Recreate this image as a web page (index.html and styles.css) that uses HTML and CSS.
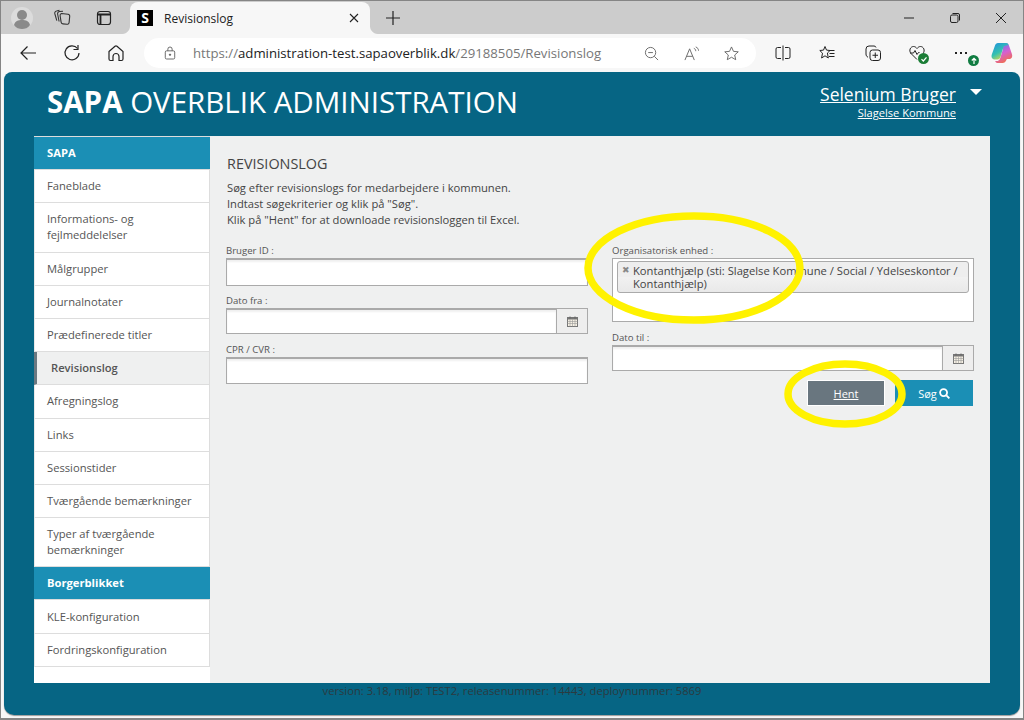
FILE: index.html
```html
<!DOCTYPE html>
<html lang="en">
<head>
    <meta charset="UTF-8">
    <title>Revisionslog</title>
    <link rel="stylesheet" href="styles.css">
</head>
<body>
    <div class="tabstrip">
        <div class="tb-btn">
            <svg class="icon-lg" viewBox="0 0 22 22"><circle cx="11" cy="11" r="11" fill="#dcdcdc"/><circle cx="11" cy="8" r="5" fill="#8a8a8a"/><path d="M3 18c1-4 4-5 8-5s7 1 8 5c-2 3-5 4-8 4s-6-1-8-4z" fill="#8a8a8a"/></svg>
        </div>
        <div class="tb-btn">
            <svg class="icon-wide" viewBox="0 0 18 18" fill="none" stroke="#333" stroke-width="1.100"><path d="M8.500 4.500l6.500.8a2 2 0 0 1 1.700 2.200l-.6 6a2 2 0 0 1-2.200 1.800l-4-.4a2 2 0 0 1-1.800-1.700l-1-6.500a2 2 0 0 1 1.400-2.200z"/><path d="M10 2.300L6.500 2.500A2.200 2.200 0 0 0 4.600 5l1.500 7.500"/><path d="M6.500 1.200L3.500 2A2.200 2.200 0 0 0 1.800 4.700l2 7"/></svg>
        </div>
        <div class="tb-btn tb-gap">
            <svg class="icon" viewBox="0 0 16 16" fill="none" stroke="#222" stroke-width="1.200"><rect x="1.500" y="1.500" width="13" height="13" rx="2.500"/><path d="M1.500 4.500h13M4.500 4.500v10" stroke-width="1.800"/></svg>
        </div>
        <div class="tab">
            <span class="favicon">S</span>
            <span class="tab-title">Revisionslog</span>
            <svg class="tab-close" viewBox="0 0 10 10" stroke="#222" stroke-width="1.100"><path d="M1 1l8 8M9 1l-8 8"/></svg>
        </div>
        <div class="tb-btn tb-new">
            <svg class="icon" viewBox="0 0 16 16" stroke="#222" stroke-width="1.200"><path d="M8 1v14M1 8h14"/></svg>
        </div>
        <div class="win-btns">
            <svg class="win-icon" viewBox="0 0 12 12" stroke="#222"><path d="M1 6h10"/></svg>
            <svg class="win-icon" viewBox="0 0 12 12" fill="none" stroke="#222"><rect x="1.500" y="3" width="7.500" height="7.500" rx="1.500"/><path d="M3.500 1.500h5.500a1.500 1.500 0 0 1 1.500 1.500v5.500"/></svg>
            <svg class="win-icon" viewBox="0 0 12 12" stroke="#222"><path d="M1 1l10 10M11 1l-10 10"/></svg>
        </div>
    </div>

    <div class="toolbar">
        <div class="tool-btn">
            <svg class="icon-lg" viewBox="0 0 18 18" fill="none" stroke="#222" stroke-width="1.200"><path d="M17 9H2M8.500 2.500L2 9l6.500 6.500"/></svg>
        </div>
        <div class="tool-btn">
            <svg class="icon-lg" viewBox="0 0 18 18" fill="none" stroke="#222" stroke-width="1.200"><path d="M14.500 4.500A7 7 0 1 0 16 9"/><path d="M15 1v4.500h-4.500"/></svg>
        </div>
        <div class="tool-btn">
            <svg class="icon-lg" viewBox="0 0 18 18" fill="none" stroke="#222" stroke-width="1.200"><path d="M2 7.500L8 2.300a1.500 1.500 0 0 1 2 0l6 5.200v7.500a1.500 1.500 0 0 1-1.500 1.500H12v-4a3 3 0 0 0-6 0v4H3.500A1.500 1.500 0 0 1 2 15z"/></svg>
        </div>
        <div class="addressbar">
            <svg class="addr-lock" viewBox="0 0 14 16" fill="none" stroke="#555"><rect x="1.500" y="5.500" width="11" height="9.500" rx="1.500"/><path d="M4.500 5.500V3.500a2.500 2.500 0 0 1 5 0v2"/><circle cx="7" cy="10" r=".8" fill="#555"/></svg>
            <span class="url"><span class="url-dim">https://</span>administration-test.sapaoverblik.dk<span class="url-dim">/29188505/Revisionslog</span></span>
            <svg class="addr-icon" viewBox="0 0 16 16" fill="none" stroke="#666"><circle cx="7" cy="7" r="5.500"/><path d="M4.500 7h5M11 11l4 4"/></svg>
            <svg class="addr-icon" viewBox="0 0 16 16" fill="none" stroke="#666"><path d="M1 15L6 3l5 12M2.800 11h6.400"/><path d="M10.500 2.500c1.500.5 2 1.500 2 3M12.500 1c2 .8 3 2.200 3 4"/></svg>
            <svg class="addr-icon" viewBox="0 0 16 16" fill="none" stroke="#666"><path d="M8 1l2.100 4.700 5.100.5-3.800 3.400 1.100 5L8 12l-4.500 2.600 1.100-5L.8 6.200l5.100-.5z"/></svg>
        </div>
        <div class="tools-right">
            <svg class="icon" viewBox="0 0 16 16" fill="none" stroke="#222"><path d="M6 2.500H2.500A1.500 1.500 0 0 0 1 4v8a1.500 1.500 0 0 0 1.500 1.500H6M10 2.500h3.500A1.500 1.500 0 0 1 15 4v8a1.500 1.500 0 0 1-1.500 1.500H10M8 .5v15"/></svg>
            <svg class="icon" viewBox="0 0 16 16" fill="none" stroke="#222"><path d="M6 1.500l1.500 3.600 3.500.4-2.600 2.500.9 5L6 10.800 2.600 13l.9-4.800L.8 5.500l3.700-.4zM10 5.500h5.500M10.500 8.500h5M10 11.500h5.500"/></svg>
            <svg class="icon" viewBox="0 0 16 16" fill="none" stroke="#222"><path d="M11 2.500a2 2 0 0 0-2-1.500H4a3 3 0 0 0-3 3v5c0 1.500.7 2.500 2 3.300"/><rect x="5" y="5" width="10.500" height="10.500" rx="2.500"/><path d="M10.250 7.500v5.500M7.500 10.250h5.500"/></svg>
            <span class="health">
                <svg class="icon" viewBox="0 0 16 16" fill="none" stroke="#222"><path d="M8 14.500L2 8.500C-.5 5.500 1.500 1.500 4.500 1.500c1.500 0 2.500.8 3.500 2 1-1.200 2-2 3.500-2 3 0 5 4 2.500 7M1 8h3.500l1.500-2.500 2 4 1.500-2h1"/></svg>
                <span class="badge badge-check">
                    <svg viewBox="0 0 8 8" fill="none" stroke="#fff" stroke-width="1.200"><path d="M1.500 4.200l1.800 1.800 3.200-3.700"/></svg>
                </span>
            </span>
            <span class="more">
                <span class="more-dots"><i></i><i></i><i></i></span>
                <span class="badge badge-up">
                    <svg viewBox="0 0 8 8" fill="none" stroke="#fff" stroke-width="1.200"><path d="M4 7V1.500M1.800 3.500L4 1.300l2.200 2.200"/></svg>
                </span>
            </span>
            <svg class="copilot" viewBox="0 0 22 22">
                <defs>
                    <linearGradient id="copA" x1="0" y1="0" x2=".6" y2="1"><stop offset="0" stop-color="#1f8fe0"/><stop offset=".6" stop-color="#35c1b0"/><stop offset="1" stop-color="#d8d84a"/></linearGradient>
                    <linearGradient id="copB" x1=".3" y1="0" x2=".7" y2="1"><stop offset="0" stop-color="#5a7cf0"/><stop offset=".5" stop-color="#d65fd0"/><stop offset="1" stop-color="#f3703f"/></linearGradient>
                </defs>
                <path d="M15 1c1.500 0 2.400.8 2.900 2.200l3 8.800c1 3-.5 5-3 5h-2c-1.500 3-2.500 4-4.400 4H7c-1.500 0-2.400-.6-2.800-2 2.800.4 4.300-.5 5.100-3l2.400-8C12.300 3 13.300 1 15 1z" fill="url(#copB)"/>
                <path d="M7 1h8c1.300 0 2 .7 2.400 2L15 3.500c-1.500 0-2.300.8-2.800 2.300L9.500 15c-.5 1.500-1.500 2.500-3 2.500H4c-3 0-4-2.500-3.200-5L4 3.500C4.500 2 5.500 1 7 1z" fill="url(#copA)"/>
            </svg>
        </div>
    </div>

    <div class="page">
        <header class="site-header">
            <h1 class="logo"><b>SAPA</b> OVERBLIK ADMINISTRATION</h1>
            <div class="user">
                <a class="user-name" href="#">Selenium Bruger</a>
                <a class="user-org" href="#">Slagelse Kommune</a>
            </div>
            <span class="user-caret"></span>
        </header>

        <div class="content">
            <nav class="sidebar">
                <a class="nav-head" href="#">SAPA</a>
                <a class="nav-item" href="#">Faneblade</a>
                <a class="nav-item" href="#">Informations- og fejlmeddelelser</a>
                <a class="nav-item" href="#">Målgrupper</a>
                <a class="nav-item" href="#">Journalnotater</a>
                <a class="nav-item" href="#">Prædefinerede titler</a>
                <a class="nav-item active" href="#">Revisionslog</a>
                <a class="nav-item" href="#">Afregningslog</a>
                <a class="nav-item" href="#">Links</a>
                <a class="nav-item" href="#">Sessionstider</a>
                <a class="nav-item" href="#">Tværgående bemærkninger</a>
                <a class="nav-item" href="#">Typer af tværgående bemærkninger</a>
                <a class="nav-head" href="#">Borgerblikket</a>
                <a class="nav-item" href="#">KLE-konfiguration</a>
                <a class="nav-item" href="#">Fordringskonfiguration</a>
            </nav>

            <main class="main">
                <h2 class="main-title">REVISIONSLOG</h2>
                <p class="intro">Søg efter revisionslogs for medarbejdere i kommunen.<br>Indtast søgekriterier og klik på "Søg".<br>Klik på "Hent" for at downloade revisionsloggen til Excel.</p>

                <form class="search-form">
                    <div class="col">
                        <div class="field">
                            <label>Bruger ID :</label>
                            <input class="input input-tall" type="text">
                        </div>
                        <div class="field">
                            <label>Dato fra :</label>
                            <div class="date-group">
                                <input class="input" type="text">
                                <span class="date-btn">
                                    <svg class="cal" viewBox="0 0 11 11"><rect x=".5" y="1.500" width="10" height="9" fill="#f6f0e4" stroke="#777"/><path d="M.5 1.500h10v2H.5z" fill="#777"/><path d="M3 .5v2M8 .5v2" stroke="#666"/><path d="M.5 5.500h10M.5 7.500h10M3 3.500v7M5.500 3.500v7M8 3.500v7" stroke="#999" stroke-width=".6"/></svg>
                                </span>
                            </div>
                        </div>
                        <div class="field field-low">
                            <label>CPR / CVR :</label>
                            <input class="input input-mid" type="text">
                        </div>
                    </div>
                    <div class="col">
                        <div class="field">
                            <label>Organisatorisk enhed :</label>
                            <div class="multi">
                                <div class="chip">
                                    <span class="chip-x">✖</span>
                                    <span>Kontanthjælp (sti: Slagelse Kommune / Social / Ydelseskontor / Kontanthjælp)</span>
                                </div>
                            </div>
                        </div>
                        <div class="field field-low">
                            <label>Dato til :</label>
                            <div class="date-group">
                                <input class="input" type="text">
                                <span class="date-btn">
                                    <svg class="cal" viewBox="0 0 11 11"><rect x=".5" y="1.500" width="10" height="9" fill="#f6f0e4" stroke="#777"/><path d="M.5 1.500h10v2H.5z" fill="#777"/><path d="M3 .5v2M8 .5v2" stroke="#666"/><path d="M.5 5.500h10M.5 7.500h10M3 3.500v7M5.500 3.500v7M8 3.500v7" stroke="#999" stroke-width=".6"/></svg>
                                </span>
                            </div>
                        </div>
                        <div class="actions">
                            <a class="btn btn-hent" href="#">Hent</a>
                            <a class="btn btn-soeg" href="#">Søg
                                <svg class="search-icon" viewBox="0 0 12 12" fill="none" stroke="#fff" stroke-width="2"><circle cx="5" cy="5" r="3.800"/><path d="M8 8l3.300 3.300"/></svg>
                            </a>
                        </div>
                    </div>
                </form>
            </main>
        </div>

        <footer class="version">version: 3.18, miljø: TEST2, releasenummer: 14443, deploynummer: 5869</footer>
    </div>

    <!-- yellow marker rings drawn over the screenshot -->
    <svg class="marker marker-org" viewBox="0 0 222 112" fill="none" stroke="#fff200" stroke-width="7.500"><ellipse cx="111" cy="56" rx="106" ry="52"/></svg>
    <svg class="marker marker-hent" viewBox="0 0 124 68" fill="none" stroke="#fff200" stroke-width="7.500"><ellipse cx="62" cy="34" rx="57" ry="30"/></svg>
</body>
</html>
```

FILE: styles.css
```css
* {
    box-sizing: border-box;
}
html, body {
    height: 100%;
}
body {
    margin: 0;
    width: 1024px;
    height: 720px;
    overflow: hidden;
    position: relative;
    display: flex;
    flex-direction: column;
    font-family: "Open Sans", "Noto Sans", sans-serif;
    background: #f7f7f7;
    border: 1px solid #858585;
    border-bottom-width: 2px;
    color: #555;
}
svg {
    display: block;
    flex-shrink: 0;
}
a {
    color: inherit;
}

/* browser chrome */
.tabstrip {
    height: 33px;
    flex-shrink: 0;
    background: #cccccc;
    display: flex;
    align-items: flex-end;
    padding: 0 0 0 1px;
}
.tb-btn {
    width: 40px;
    height: 32px;
    display: flex;
    align-items: center;
    justify-content: center;
}
.tb-gap {
    margin-left: 2px;
    margin-right: 6px;
}
.tb-new {
    margin-left: 2px;
}
.icon {
    width: 16px;
    height: 16px;
}
.icon-wide {
    width: 18px;
    height: 18px;
}
.icon-lg {
    width: 22px;
    height: 22px;
}
.tab {
    position: relative;
    width: 240px;
    height: 32px;
    margin-right: 1px;
    background: #f7f7f7;
    border-radius: 8px 8px 0 0;
    display: flex;
    align-items: center;
    padding: 0 11px 0 7px;
}
.tab::before, .tab::after {
    content: "";
    position: absolute;
    bottom: 0;
    width: 8px;
    height: 8px;
}
.tab::before {
    left: -8px;
    background: radial-gradient(circle at 0 0, #ccc 7.500px, #f7f7f7 8.500px);
}
.tab::after {
    right: -8px;
    background: radial-gradient(circle at 100% 0, #ccc 7.500px, #f7f7f7 8.500px);
}
.favicon {
    width: 16px;
    height: 16px;
    background: #000;
    color: #fff;
    font-weight: 700;
    font-size: 14px;
    line-height: 16px;
    text-align: center;
}
.tab-title {
    flex: 1;
    margin-left: 11px;
    font-size: 12px;
    color: #222;
}
.tab-close {
    width: 10px;
    height: 10px;
}
.win-btns {
    margin-left: auto;
    height: 32px;
    display: flex;
    align-items: center;
    gap: 34px;
    padding-right: 16px;
}
.win-icon {
    width: 12px;
    height: 12px;
}
.toolbar {
    height: 38px;
    flex-shrink: 0;
    display: flex;
    align-items: center;
    padding: 0 0 0 5px;
}
.tool-btn {
    width: 44px;
    display: flex;
    justify-content: center;
}
.tool-btn .icon-lg {
    width: 18px;
    height: 18px;
}
.addressbar {
    width: 612px;
    height: 30px;
    margin-left: 6px;
    background: #fff;
    border-radius: 15px;
    display: flex;
    align-items: center;
    padding: 0 17px 0 20px;
}
.addr-lock {
    width: 12px;
    height: 14px;
}
.url {
    flex: 1;
    margin-left: 17px;
    font-size: 13.200px;
    color: #222;
    white-space: nowrap;
}
.url-dim {
    color: #777;
}
.addr-icon {
    width: 15px;
    height: 15px;
    margin-left: 25px;
}
.tools-right {
    display: flex;
    align-items: center;
    margin-left: 19px;
    gap: 28px;
}
.tools-right > :nth-child(3) {
    margin-left: 2px;
}
.more {
    margin-left: 2px;
}
.health, .more {
    position: relative;
    display: block;
    width: 16px;
    height: 16px;
}
.badge {
    position: absolute;
    width: 11px;
    height: 11px;
    border-radius: 50%;
    padding: 1.500px;
}
.badge-check {
    right: -4px;
    bottom: -3px;
    background: #1b7d36;
}
.badge-up {
    right: -8px;
    bottom: -5px;
    background: #107c41;
}
.more-dots {
    display: flex;
    gap: 3px;
    padding: 7px 0 0 0;
}
.more-dots i {
    width: 2px;
    height: 2px;
    background: #222;
}
.copilot {
    width: 22px;
    height: 22px;
    margin-left: -8px;
}

/* page */
.page {
    flex: 1;
    margin: 0 3px 3px;
    background: #066584;
    border-radius: 8px 8px 10px 10px;
    display: flex;
    flex-direction: column;
    box-shadow: 0 1px 1px #999;
}
.site-header {
    height: 64px;
    flex-shrink: 0;
    display: flex;
    align-items: flex-start;
    padding: 0 38px 0 43px;
    color: #fff;
}
.logo {
    margin: 0;
    flex: 1;
    font-size: 29.500px;
    font-weight: 400;
    line-height: 60px;
}
.logo b {
    font-weight: 700;
}
.user {
    display: flex;
    flex-direction: column;
    align-items: flex-end;
    padding-top: 9px;
}
.user-name {
    font-size: 17.500px;
    line-height: 26px;
    color: #fff;
}
.user-org {
    font-size: 11.100px;
    line-height: 14px;
    margin-top: -1px;
    color: #fff;
}
.user-caret {
    margin: 17px 0 0 14px;
    border-style: solid;
    border-width: 6px 6px 0;
    border-color: #fff transparent transparent;
}
.content {
    height: 547px;
    flex-shrink: 0;
    margin: 0 30px;
    display: flex;
    background: #eff0f0;
}
.sidebar {
    width: 176px;
    flex-shrink: 0;
    background: #fff;
    border-top: 1px solid #ddd;
    font-size: 11.200px;
    line-height: 16px;
}
.nav-head, .nav-item {
    display: block;
    text-decoration: none;
    padding: 8.100px 13px;
    border-bottom: 1px solid #ddd;
}
.nav-head {
    background: #1b8fb5;
    color: #fff;
    font-weight: 700;
}
.nav-item {
    color: #555;
    padding-left: 12px;
    border-right: 1px solid #ddd;
    border-left: 1px solid #e9e9e9;
}
.nav-item.active {
    background: #eff0f0;
    border-left: 3px solid #6a7881;
    padding-left: 14px;
    font-weight: 600;
}
.main {
    flex: 1;
    padding: 19px 16px 0 16px;
}
.main-title {
    margin: 0 0 0 1px;
    font-size: 14.400px;
    font-weight: 400;
    line-height: 18px;
    color: #444;
}
.intro {
    margin: 7px 0 0 1px;
    font-size: 11.200px;
    line-height: 16px;
    color: #444;
}
.search-form {
    display: grid;
    grid-template-columns: 362px 362px;
    column-gap: 24px;
    margin-top: 16px;
}
.field {
    display: flex;
    flex-direction: column;
}
.field label {
    font-size: 9.600px;
    line-height: 14px;
    height: 14px;
    color: #555;
}
.col .field + .field {
    margin-top: 8px;
}
.col .field.field-low {
    margin-top: 9px;
}
.input {
    width: 100%;
    height: 26px;
    display: block;
    border: 1px solid #aaa;
    border-top-width: 2px;
    background: #fff;
    box-shadow: inset 0 2px 2px #f0f0f0;
    padding: 0 6px;
}
.input-tall {
    height: 28px;
}
.input-mid {
    height: 27px;
}
.date-group {
    display: flex;
}
.date-group .input {
    flex: 1;
    min-width: 0;
}
.date-btn {
    width: 31px;
    height: 26px;
    flex-shrink: 0;
    background: #eee;
    border: 1px solid #aaa;
    border-left: 0;
    display: flex;
    align-items: center;
    justify-content: center;
}
.cal {
    width: 11px;
    height: 11px;
}
.multi {
    height: 64px;
    background: #fff;
    border: 1px solid #aaa;
    padding: 2px 4px;
}
.chip {
    display: flex;
    background: linear-gradient(#eee 50%, #f1f1f1 50%, #e9e9e9);
    border: 1px solid #aaa;
    border-radius: 3px;
    height: 32px;
    padding: 2px 4px;
    font-size: 11.200px;
    line-height: 13px;
    color: #444;
}
.chip-x {
    width: 11px;
    flex-shrink: 0;
    color: #888;
    font-size: 9px;
    font-family: "DejaVu Sans", sans-serif;
}
.actions {
    display: flex;
    justify-content: flex-end;
    gap: 10px;
    margin-top: 9px;
    padding-right: 1px;
}
.btn {
    width: 78px;
    height: 26px;
    display: flex;
    align-items: center;
    justify-content: center;
    font-size: 11px;
    color: #fff;
}
.btn-hent {
    background: #69767f;
    border: 1px solid #fff;
}
.btn-soeg {
    background: #1b8fb5;
    text-decoration: none;
    gap: 2px;
}
.search-icon {
    width: 11px;
    height: 11px;
}
.version {
    text-align: center;
    font-size: 11.200px;
    line-height: 16px;
    color: #2b3a40;
}

/* annotation rings */
.marker {
    position: absolute;
}
.marker-org {
    left: 582px;
    top: 211px;
    width: 222px;
    height: 112px;
}
.marker-hent {
    left: 782px;
    top: 359px;
    width: 124px;
    height: 68px;
}
```
